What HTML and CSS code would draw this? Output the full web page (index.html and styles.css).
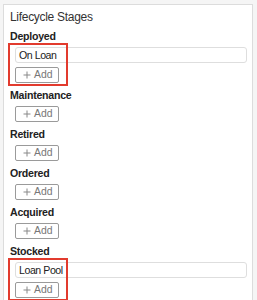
FILE: index.html
```html
<!DOCTYPE html>
<html lang="en">
<head>
    <meta charset="UTF-8">
    <title>Lifecycle Stages</title>
    <link rel="stylesheet" href="styles.css">
</head>
<body>
    <div class="panel">
        <div class="title">Lifecycle Stages</div>

        <div class="stage">
            <div class="stage-name">Deployed</div>
            <div class="stage-body">
                <div class="highlight"></div>
                <div class="value">On Loan</div>
                <button class="add-btn"><svg class="plus" width="8" height="8" viewBox="0 0 8 8"><path d="M4 0.5V7.5M0.5 4H7.5"/></svg>Add</button>
            </div>
        </div>

        <div class="stage">
            <div class="stage-name">Maintenance</div>
            <div class="stage-body">
                <button class="add-btn"><svg class="plus" width="8" height="8" viewBox="0 0 8 8"><path d="M4 0.5V7.5M0.5 4H7.5"/></svg>Add</button>
            </div>
        </div>

        <div class="stage">
            <div class="stage-name">Retired</div>
            <div class="stage-body">
                <button class="add-btn"><svg class="plus" width="8" height="8" viewBox="0 0 8 8"><path d="M4 0.5V7.5M0.5 4H7.5"/></svg>Add</button>
            </div>
        </div>

        <div class="stage">
            <div class="stage-name">Ordered</div>
            <div class="stage-body">
                <button class="add-btn"><svg class="plus" width="8" height="8" viewBox="0 0 8 8"><path d="M4 0.5V7.5M0.5 4H7.5"/></svg>Add</button>
            </div>
        </div>

        <div class="stage">
            <div class="stage-name">Acquired</div>
            <div class="stage-body">
                <button class="add-btn"><svg class="plus" width="8" height="8" viewBox="0 0 8 8"><path d="M4 0.5V7.5M0.5 4H7.5"/></svg>Add</button>
            </div>
        </div>

        <div class="stage">
            <div class="stage-name">Stocked</div>
            <div class="stage-body">
                <div class="highlight"></div>
                <div class="value">Loan Pool</div>
                <button class="add-btn"><svg class="plus" width="8" height="8" viewBox="0 0 8 8"><path d="M4 0.5V7.5M0.5 4H7.5"/></svg>Add</button>
            </div>
        </div>
    </div>
</body>
</html>
```

FILE: styles.css
```css
/* Lifecycle panel */
body {
    margin: 0;
    padding: 4px 4px 0 3px;
    background-color: #f5f5f5;
    font-family: "Liberation Sans", Arial, sans-serif;
    color: #222;
    height: 296px;
    overflow: hidden;
}
.panel {
    background-color: #fff;
    border: 1px solid #dcdcdc;
    border-bottom: none;
    padding: 4px 5px 0 6px;
    height: 100%;
    box-sizing: border-box;
}
.title {
    font-size: 12px;
    letter-spacing: -0.3px;
    line-height: 16px;
    color: #333;
    margin-bottom: 4px;
}
.stage {
    margin-bottom: 5px;
}
.stage-name {
    font-size: 10.6px;
    font-weight: bold;
    letter-spacing: -0.25px;
    line-height: 14px;
    margin-bottom: 4px;
}
.stage-body {
    position: relative;
    display: flex;
    flex-direction: column;
    align-items: flex-start;
    gap: 4px;
    padding-left: 5px;
}
.value {
    align-self: stretch;
    height: 16px;
    box-sizing: border-box;
    border: 1px solid #dedede;
    border-radius: 3px;
    padding: 0 3px;
    font-size: 10.6px;
    letter-spacing: -0.45px;
    line-height: 14px;
    color: #222;
}
.add-btn {
    display: flex;
    align-items: center;
    gap: 3px;
    width: 44px;
    height: 16px;
    box-sizing: border-box;
    padding: 0 0 0 7px;
    border: 1px solid #9a9a9a;
    border-radius: 2px;
    background-color: #fff;
    font-family: "Liberation Sans", Arial, sans-serif;
    font-size: 10.4px;
    line-height: 14px;
    color: #777;
}
.plus {
    stroke: #888;
    stroke-width: 1;
    fill: none;
}
.highlight {
    position: absolute;
    left: -2px;
    top: -4px;
    width: 60px;
    height: 43px;
    box-sizing: border-box;
    border: 2px solid #e23b2e;
}
```
